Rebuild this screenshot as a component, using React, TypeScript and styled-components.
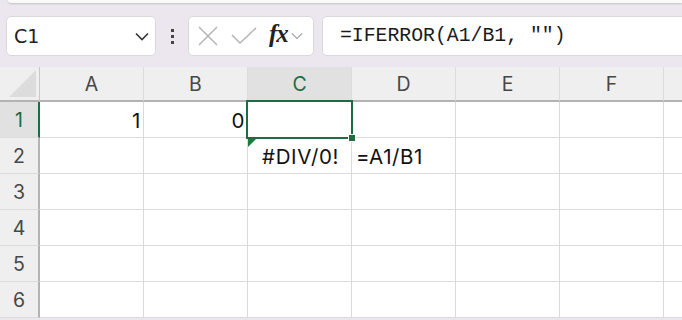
import React from "react";
import styled, { createGlobalStyle, css } from "styled-components";

const GREEN = "#1e6c41";

const Global = createGlobalStyle`
  html, body {
    margin: 0;
    padding: 0;
    background: #ece7ee;
    overflow: hidden;
  }
`;

const Page = styled.div`
  width: 682px;
  height: 320px;
  overflow: hidden;
  display: flex;
  flex-direction: column;
  background: #ece7ee;
`;

const RibbonEdge = styled.div`
  height: 3px;
  margin-left: 8px;
  background: #fbfafb;
  border-radius: 0 0 0 8px;
  box-shadow: 0 1px 2px rgba(0, 0, 0, 0.18);
`;

const FormulaRow = styled.div`
  display: flex;
  align-items: center;
  height: 40px;
  margin: 13px 0 11px 6px;
`;

const Box = styled.div`
  height: 40px;
  box-sizing: border-box;
  background: #fff;
  border: 1px solid #dcd8de;
  border-radius: 5px;
  display: flex;
  align-items: center;
`;

const NameBox = styled(Box)`
  width: 150px;
  padding: 0 6px 0 7px;
  justify-content: space-between;
  font-family: "DejaVu Sans", sans-serif;
  font-size: 19px;
  color: #222;
`;

const Grip = styled.div`
  width: 32px;
  display: flex;
  flex-direction: column;
  align-items: center;
  gap: 3px;

  span {
    width: 3px;
    height: 3px;
    background: #444;
  }
`;

const Buttons = styled(Box)`
  width: 126px;
  padding: 0 0 0 8px;
`;

const FxText = styled.span`
  font-family: "Liberation Serif", serif;
  font-style: italic;
  font-weight: bold;
  font-size: 25px;
  color: #222;
  margin: -4px 3px 0 12px;
  letter-spacing: -1px;
`;

const FormulaBar = styled(Box)`
  flex: 1;
  margin-left: 8px;
  margin-right: -12px;
  padding-left: 17px;
  border-radius: 5px 0 0 5px;
  font-family: "Liberation Mono", monospace;
  font-size: 19.8px;
  color: #1a1a1a;
`;

const Grid = styled.div`
  display: grid;
  grid-template-columns: 40px repeat(7, 104px);
  grid-auto-rows: 36px;
  grid-template-rows: 35px;
  background: #fff;
  font-family: Inter, "Noto Sans", sans-serif;
`;

const HeadCell = styled.div<{ $active?: boolean }>`
  box-sizing: border-box;
  background: ${(p) => (p.$active ? "#e1e1e1" : "#efefef")};
  color: ${(p) => (p.$active ? GREEN : "#474747")};
  border-right: 1px solid #dcdcdc;
  border-bottom: ${(p) => (p.$active ? `2px solid ${GREEN}` : "2px solid #b3b3b3")};
  display: flex;
  align-items: center;
  justify-content: center;
  font-size: 19.5px;
  padding-top: 1px;
`;

const Corner = styled.div`
  position: relative;
  box-sizing: border-box;
  background: #efefef;
  border-right: 1px solid #c8c8c8;
  border-bottom: 2px solid #b3b3b3;

  &::after {
    content: "";
    position: absolute;
    right: 3px;
    bottom: 3px;
    width: 0;
    height: 0;
    border-left: 27px solid transparent;
    border-bottom: 27px solid #dcdcdc;
  }
`;

const RowHead = styled.div<{ $active?: boolean }>`
  box-sizing: border-box;
  background: ${(p) => (p.$active ? "#e1e1e1" : "#efefef")};
  color: ${(p) => (p.$active ? GREEN : "#474747")};
  border-right: ${(p) => (p.$active ? `2px solid ${GREEN}` : "2px solid #b3b3b3")};
  border-bottom: 1px solid #dcdcdc;
  display: flex;
  align-items: center;
  justify-content: center;
  font-size: 19.5px;
`;

const Cell = styled.div<{ $align?: "left" | "right" | "center"; $selected?: boolean; $flag?: boolean }>`
  position: relative;
  box-sizing: border-box;
  border-right: 1px solid #dadada;
  border-bottom: 1px solid #dadada;
  display: flex;
  align-items: center;
  justify-content: ${(p) =>
    p.$align === "right" ? "flex-end" : p.$align === "center" ? "center" : "flex-start"};
  padding: 1px 2px 0 4px;
  font-size: 20.5px;
  letter-spacing: 0.6px;
  color: #111;
  white-space: nowrap;

  ${(p) =>
    p.$selected &&
    css`
      &::after {
        content: "";
        position: absolute;
        left: -2px;
        top: -2px;
        right: -2px;
        bottom: -2px;
        border: 2px solid ${GREEN};
        z-index: 2;
      }
      &::before {
        content: "";
        position: absolute;
        right: -5px;
        bottom: -5px;
        width: 6px;
        height: 6px;
        background: ${GREEN};
        border: 1px solid #fff;
        z-index: 3;
      }
    `}

  ${(p) =>
    p.$flag &&
    css`
      &::before {
        content: "";
        position: absolute;
        left: 0;
        top: 1px;
        border-top: 8px solid #1e7a3a;
        border-right: 8px solid transparent;
      }
    `}
`;

const Chevron = ({ size, color, sw }: { size: number; color: string; sw: number }) => (
  <svg width={size} height={size / 2 + 2} viewBox="0 0 14 9" fill="none">
    <path d="M1 1.5 L7 7.5 L13 1.5" stroke={color} strokeWidth={sw} />
  </svg>
);

// G is only partly on screen, its letter falls past the right edge
const cols = ["A", "B", "C", "D", "E", "F", "G"];
const visible = (c: string) => c !== "G";

type CellData = { text?: string; align?: "left" | "right" | "center"; selected?: boolean; flag?: boolean };

const data: Record<string, CellData> = {
  A1: { text: "1", align: "right" },
  B1: { text: "0", align: "right" },
  C1: { selected: true },
  C2: { text: "#DIV/0!", align: "center", flag: true },
  D2: { text: "=A1/B1" },
};

export default function App() {
  return (
    <Page>
      <Global />
      <RibbonEdge />
      <FormulaRow>
        <NameBox>
          <span>C1</span>
          <Chevron size={14} color="#333" sw={1.6} />
        </NameBox>
        <Grip>
          <span />
          <span />
          <span />
        </Grip>
        <Buttons>
          <svg width="22" height="22" viewBox="0 0 22 22">
            <path d="M2 2 L20 20 M20 2 L2 20" stroke="#b4b4b4" strokeWidth="1.5" />
          </svg>
          <svg width="26" height="18" viewBox="0 0 26 18" style={{ marginLeft: 12 }}>
            <path d="M1 8 L9 16 L25 1" stroke="#b4b4b4" strokeWidth="1.5" fill="none" />
          </svg>
          <FxText>fx</FxText>
          <Chevron size={12} color="#999" sw={1.3} />
        </Buttons>
        <FormulaBar>=IFERROR(A1/B1, "")</FormulaBar>
      </FormulaRow>
      <Grid>
        <Corner />
        {cols.map((c) => (
          <HeadCell key={c} $active={c === "C"}>
            {visible(c) ? c : null}
          </HeadCell>
        ))}
        {[1, 2, 3, 4, 5, 6].map((r) => (
          <React.Fragment key={r}>
            <RowHead $active={r === 1}>{r}</RowHead>
            {cols.map((c) => {
              const d = data[`${c}${r}`] || {};
              return (
                <Cell key={c} $align={d.align} $selected={d.selected} $flag={d.flag}>
                  {d.text}
                </Cell>
              );
            })}
          </React.Fragment>
        ))}
      </Grid>
    </Page>
  );
}
